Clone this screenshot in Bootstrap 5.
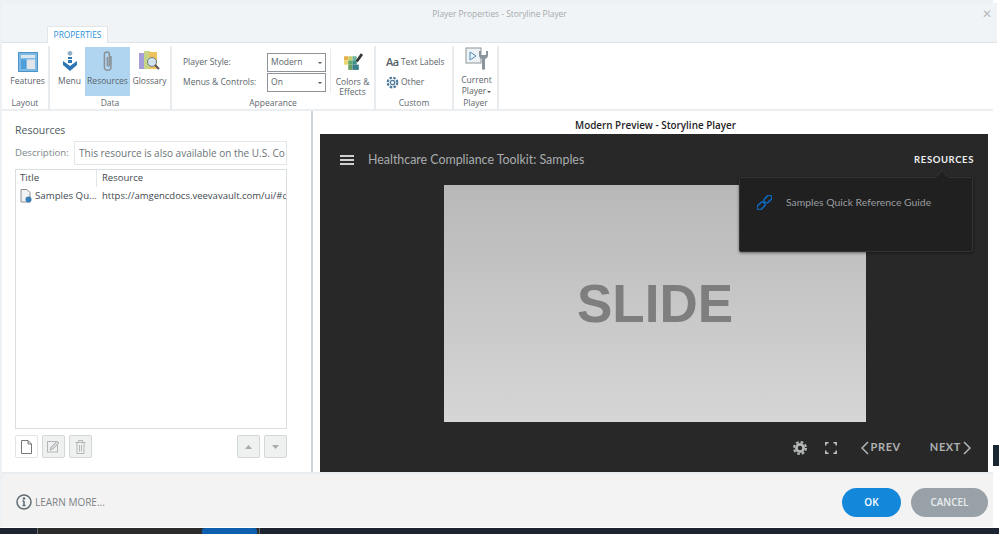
<!DOCTYPE html>
<html lang="en"><head><meta charset="utf-8">
<link href="https://cdn.jsdelivr.net/npm/bootstrap@5.3.0/dist/css/bootstrap.min.css" rel="stylesheet">
<style>
html,body{margin:0;height:534px;overflow:hidden;background:#fff;font-family:"Open Sans","Noto Sans",sans-serif}
.shell{width:999px;height:534px;position:relative;background:#fff}
.win{width:993px;height:527px;display:flex;flex-direction:column;background:#fff;border-top:3px solid #eef1f3;border-left:2px solid #eef1f3}
.titlebar{height:23px;width:995px;background:#f1f4f6;display:flex;justify-content:center;align-items:center;font-size:8.4px;color:#a4a9ad;position:relative;flex:none}
.closex{position:absolute;right:5px;top:3px;font-size:12px;color:#b6babd;line-height:16px}
.tabrow{height:17px;width:995px;background:#f1f4f6;flex:none;border-bottom:1px solid #dfe4e7;position:relative}
.ribtab{position:absolute;left:45px;top:0;height:17px;width:61px;background:#fff;color:#2b8fd8;font-size:8.4px;display:flex;align-items:center;justify-content:center;border:1px solid #e1e6e9;border-bottom:0}
.ribbon{height:68px;display:flex;flex:none;border-bottom:2px solid #eceff1;background:#fff;color:#5a6469;font-size:8.5px}
.rgroup{display:flex;flex-direction:column;border-right:2px solid #e8ecee;margin-top:3px;height:64px;flex:none}
.rbody{flex:1;display:flex;min-height:0}
.rlabel{height:14px;text-align:center;font-size:8.5px;line-height:14px;color:#5f696e}
.rbtn{display:flex;flex-direction:column;align-items:center;text-align:center;line-height:10px;flex:none;white-space:nowrap}
.rbtn svg{display:block;flex:none}
.rbtn.sel{background:#b0d5f0;width:45px;height:49px;margin-top:1px;padding-top:3px}
.rbtn.tall{line-height:11px}
.tricaret{display:inline-block;border-left:2.5px solid transparent;border-right:2.5px solid transparent;border-top:2.5px solid #555;vertical-align:middle;margin-left:1px}
.psel{width:59px;height:19px;border:1px solid #8e9497;background:#fff;font-size:8.5px;display:flex;align-items:center;justify-content:space-between;padding:0 3px;margin-bottom:1px;color:#5a6469}
.psel i{border-left:2px solid transparent;border-right:2px solid transparent;border-top:2px solid #555;display:block}
.main{flex:1;display:flex;min-height:0}
.leftp{width:311px;flex:none;padding:12px 0 0 13px;border-right:2px solid #cdd4d9;color:#5a6469;font-size:10px}
.leftp h6{font-size:10.5px;margin:0 0 4px;font-weight:400;color:#4f5a60;line-height:14px}
.descline{display:flex;align-items:center;height:24px;font-size:9.6px;color:#7d868b}
.desclab{width:59px;flex:none}
.descbox{width:213px;height:24px;border:1px solid #e2e7ea;font-size:10px;color:#6a7378;display:flex;align-items:center;padding-left:4px;white-space:nowrap;overflow:hidden}
.rlist{width:272px;height:260px;margin-top:4px;border:1px solid #d9dee1;font-size:9.7px;color:#3f4a50;overflow:hidden}
.rrow{display:flex;height:19px;align-items:center;white-space:nowrap}
.rrow.headr{height:17px}
.c1{width:81px;padding-left:4px;flex:none;display:flex;align-items:center;gap:3px}
.c2{padding-left:5px;overflow:hidden;font-size:9.5px}
.headr .c1{border-right:1px solid #e2e6e8;height:17px}
.toolrow{display:flex;margin-top:6px;width:272px;gap:4px}
.tbtn{width:23px;height:23px;border:1px solid #d2d7da;background:#eff0f0;display:flex;align-items:center;justify-content:center;border-radius:2px;flex:none}
.tbtn.on{background:#fff;border-color:#dfe5e8}
.tbtn.sp{margin-left:auto}
.rightp{flex:1;display:flex;flex-direction:column;min-width:0;padding-left:7px}
.prevtitle{height:23px;text-align:center;font-size:9.9px;font-weight:600;color:#1f2326;line-height:26px;padding:1px 2px 0 0;flex:none}
.stage{width:668px;height:338px;background:#282828;position:relative;flex:none;display:flex;flex-direction:column;font-family:Lato,sans-serif}
.stop{height:51px;display:flex;align-items:center;padding:1px 0 0 20px;flex:none}
.burger{width:14px;height:10px;border-top:2px solid #cfcfcf;border-bottom:2px solid #cfcfcf;position:relative;margin-right:14px;flex:none}
.burger::after{content:"";position:absolute;left:0;right:0;top:2px;height:2px;background:#cfcfcf}
.stitle{font-size:12.4px;color:#a9adaf;flex:1}
.sres{font-size:9.5px;font-weight:700;color:#eceeef;letter-spacing:.6px;margin-right:14px;padding-top:1px}
.slide{width:422px;height:237px;margin-left:124px;background:linear-gradient(#b8b8b8,#d6d6d6);display:flex;align-items:center;justify-content:center;font-family:"Liberation Sans",sans-serif;font-weight:700;font-size:53px;color:#7e7e7e;flex:none}
.snav{flex:1;display:flex;align-items:center;justify-content:flex-end;color:#aeb1b2;font-weight:700;font-size:11px;letter-spacing:.6px;padding-top:1px}
.pop{position:absolute;left:419px;top:43px;width:234px;height:75px;background:#202020;border:1px solid #333;border-radius:2px;box-shadow:0 1px 3px rgba(0,0,0,.5);display:flex;padding:17px 0 0 17px;font-size:10.4px;color:#9a9ea0;gap:14px}
.pop::before{content:"";position:absolute;right:25px;top:-6px;width:10px;height:10px;background:#202020;border-left:1px solid #333;border-top:1px solid #333;transform:rotate(45deg)}
.foot{height:55px;flex:none;background:#f3f3f3;border-top:2px solid #e9edef;display:flex;align-items:center;padding:3px 0 0 14px;color:#7b8287;font-size:10px;gap:3px}
.pillb{height:29px;border-radius:15px;color:#fff;font-size:10px;font-weight:600;display:flex;align-items:center;justify-content:center;border:0;padding:0}
.okb{width:59px;background:#1388da;margin-left:auto;margin-right:7px}
.cancelb{width:77px;background:#98a1a7;margin-right:5px;color:#e8ecee}
.rightedge{position:absolute;right:0;top:445px;width:6px;height:21px;background:#1b2730}
.taskbar{position:absolute;left:0;right:0;bottom:0;height:6px;background:#1b2430;display:flex}
.tb1{margin-left:37px;width:223px;background:#2c2c2c;border-left:1px solid #666;border-right:1px solid #666;position:relative}
.tb2{position:absolute;left:164px;top:0;width:55px;height:6px;background:#0e5fae;border-radius:3px 3px 0 0}
</style></head><body>
<div class="shell">
<div class="win">
 <div class="titlebar">Player Properties - Storyline Player<span class="closex">✕</span></div>
 <div class="tabrow"><div class="ribtab">PROPERTIES</div></div>
 <div class="ribbon">
  <div class="rgroup" style="width:48px"><div class="rbody"><div class="rbtn" style="width:51px;padding-top:6px;margin-right:-5px"><svg width="20" height="20" viewBox="0 0 20 20"><rect x=".5" y=".5" width="19" height="19" fill="#7cb9e4" stroke="#4b93c6"/><rect x="3" y="3" width="14" height="3" fill="#dbe6ee"/><rect x="3" y="7.500" width="5" height="9.500" fill="#4e9fd8"/><rect x="9" y="7.500" width="8" height="9.500" fill="#e3e6e8"/></svg><span style="margin-top:4px">Features</span></div></div><div class="rlabel">Layout</div></div>
  <div class="rgroup" style="width:122px"><div class="rbody">
   <div class="rbtn" style="width:35px;padding:4px 0 0 4px"><svg width="20" height="22" viewBox="0 0 20 22"><path d="M10 1a2.400 2.400 0 0 1 2 3.600L10 6 8 4.600A2.400 2.400 0 0 1 10 1z" fill="#8daec8"/><rect x="8" y="7" width="4" height="2" fill="#2d76b5"/><rect x="8" y="10" width="4" height="3" fill="#2d76b5"/><path d="M3 11l7 5 7-5v4l-7 6-7-6z" fill="#2d76b5"/></svg><span style="margin-top:4px">Menu</span></div>
   <div class="rbtn sel"><svg width="14" height="23" viewBox="0 0 14 23" fill="none" stroke="#8a9297" stroke-width="1.500"><path d="M10 6v11a3.300 3.300 0 0 1-6.600 0V4.500a2.500 2.500 0 0 1 5 0V15a1 1 0 0 1-2 0V7"/></svg><span style="margin-top:3px">Resources</span></div>
   <div class="rbtn" style="width:39px;padding-top:4px"><svg width="23" height="22" viewBox="0 0 23 22"><rect x="1" y="3" width="6" height="16" fill="#a49fd8"/><rect x="6" y="1" width="6" height="18" fill="#c5d486"/><rect x="11" y="2" width="8" height="17" fill="#eec35e"/><circle cx="14" cy="12" r="4.500" fill="#cfe2ee" stroke="#6b7b85"/><path d="M17 15l4 4" stroke="#555" stroke-width="2"/></svg><span style="margin-top:4px">Glossary</span></div>
  </div><div class="rlabel">Data</div></div>
  <div class="rgroup" style="width:204px"><div class="rbody">
   <div style="width:96px;padding:6px 0 0 11px;line-height:20px;white-space:nowrap"><div>Player Style:</div><div>Menus &amp; Controls:</div></div>
   <div style="padding-top:7px"><div class="psel">Modern<i></i></div><div class="psel">On<i></i></div></div>
   <div style="width:1px;height:44px;background:#e8ecee;margin:3px 0 0 4px"></div>
   <div class="rbtn" style="width:43px;padding-top:6px"><svg width="20" height="19" viewBox="1 0 19 18"><path d="M2 4h4v4H2z" fill="#e8b04c"/><path d="M6 4h4v4H6z" fill="#c8cf6a"/><path d="M10 4h4v4h-4z" fill="#6fb4a0"/><path d="M2 8h4v4H2z" fill="#ecd76a"/><path d="M6 8h4v4H6z" fill="#5fa86e"/><path d="M10 8h4v4h-4z" fill="#3d8f86"/><path d="M6 12h4v5H6z" fill="#6d9f5e"/><path d="M10 12h6v5h-6z" fill="#3b7f8c"/><path d="M14 9l5-7" stroke="#333" stroke-width="2.500"/></svg><span style="margin-top:6px">Colors &amp;<br>Effects</span></div>
  </div><div class="rlabel">Appearance</div></div>
  <div class="rgroup" style="width:78px"><div class="rbody"><div style="padding:6px 0 0 10px;line-height:20px;white-space:nowrap">
    <div class="d-flex align-items-center" style="gap:2px"><span style="font-size:11px;font-weight:600;color:#596268;width:13px;letter-spacing:-.5px">Aa</span><span style="font-size:8.3px">Text Labels</span></div>
    <div class="d-flex align-items-center" style="gap:2px"><svg width="13" height="13" viewBox="0 0 13 13" fill="none" stroke="#4d7a9c" stroke-width="1.300"><circle cx="6.500" cy="6.500" r="2.200"/><circle cx="6.500" cy="6.500" r="4.800" stroke-dasharray="2.500 1.300" stroke-width="2.200"/></svg>Other</div>
  </div></div><div class="rlabel">Custom</div></div>
  <div class="rgroup" style="width:45px"><div class="rbody"><div class="rbtn tall" style="width:43px;padding:1px 0 0 2px"><svg width="24" height="25" viewBox="0 0 24 25"><rect x="1" y="1" width="15" height="15" fill="#eef2f5" stroke="#8b969c"/><path d="M5 5l6 4-6 4z" fill="none" stroke="#4d8bbd"/><path d="M14 4v5a4 4 0 0 0 3 3v10a2 2 0 0 0 3 0V12a4 4 0 0 0 3-3V4l-2 0v4h-5V4z" fill="#8b969c"/></svg><span style="margin-top:2px">Current<br>Player<i class="tricaret"></i></span></div></div><div class="rlabel">Player</div></div>
 </div>
 <div class="main">
  <div class="leftp">
   <h6>Resources</h6>
   <div class="descline"><span class="desclab">Description:</span><div class="descbox">This resource is also available on the U.S. Co</div></div>
   <div class="rlist">
    <div class="rrow headr"><div class="c1">Title</div><div class="c2">Resource</div></div>
    <div class="rrow"><div class="c1"><svg width="12" height="14" viewBox="0 0 12 14"><path d="M1 .5h6l3 3v9.500H1z" fill="#f1f2f3" stroke="#8b9297"/><circle cx="8.500" cy="10.500" r="3" fill="#3b7fb9"/></svg>Samples Qu...</div><div class="c2">https://amgencdocs.veevavault.com/ui/#d</div></div>
   </div>
   <div class="toolrow">
    <div class="tbtn on"><svg width="11" height="14" viewBox="0 0 11 14" fill="none" stroke="#777"><path d="M.5.500h6.500l3.500 3.500v9.500H.5zM7 .5v3.500h3.500"/></svg></div>
    <div class="tbtn"><svg width="13" height="13" viewBox="0 0 13 13" fill="none" stroke="#b3b6b8"><rect x=".5" y="1.500" width="10" height="10.500"/><path d="M3 10l1-3 6-6 2 2-6 6z" fill="#d3d5d6"/></svg></div>
    <div class="tbtn"><svg width="11" height="14" viewBox="0 0 11 14" fill="none" stroke="#b3b6b8"><path d="M.5 2.500h10M3.500 2.500V.5h4v2M2 2.500v11h7v-11M4.500 5v6.500M6.500 5v6.500"/></svg></div>
    <div class="tbtn sp"><svg width="7" height="4" viewBox="0 0 7 4"><path d="M3.500 0L7 4H0z" fill="#a8abad"/></svg></div>
    <div class="tbtn"><svg width="7" height="4" viewBox="0 0 7 4"><path d="M3.500 4L7 0H0z" fill="#a8abad"/></svg></div>
   </div>
  </div>
  <div class="rightp">
   <div class="prevtitle">Modern Preview - Storyline Player</div>
   <div class="stage">
    <div class="stop"><div class="burger"></div><div class="stitle">Healthcare Compliance Toolkit: Samples</div><div class="sres">RESOURCES</div></div>
    <div class="slide">SLIDE</div>
    <div class="snav">
     <svg width="14" height="14" viewBox="0 0 14 14" fill="none" style="margin-right:18px"><circle cx="7" cy="7" r="5" fill="#b4b7b8"/><circle cx="7" cy="7" r="6" stroke="#b4b7b8" stroke-width="2" stroke-dasharray="2.700 2"/><circle cx="7" cy="7" r="2.200" fill="#282828"/></svg>
     <svg width="12" height="12" viewBox="0 0 12 12" fill="none" stroke="#c4c6c7" stroke-width="1.500" style="margin-right:24px"><path d="M.8 3.500V.8h2.700M8.500.8h2.700v2.700M11.200 8.500v2.700H8.500M3.500 11.200H.8V8.500"/></svg>
     <svg width="8" height="14" viewBox="0 0 8 14" fill="none" stroke="#b4b7b8" stroke-width="1.500" style="margin-right:2px"><path d="M7 1L1 7l6 6"/></svg><span style="margin-right:29px">PREV</span>
     <span style="margin-right:2px">NEXT</span><svg width="8" height="14" viewBox="0 0 8 14" fill="none" stroke="#b4b7b8" stroke-width="1.500" style="margin-right:17px"><path d="M1 1l6 6-6 6"/></svg>
    </div>
    <div class="pop"><svg width="15" height="15" viewBox="0 0 15 15" fill="none" stroke="#0f64b4" stroke-width="1.700"><rect x="6.500" y="1.500" width="9" height="5" rx="2.500" transform="rotate(-45 11 4)"/><rect x="-.5" y="8.500" width="9" height="5" rx="2.500" transform="rotate(-45 4 11)"/></svg><span>Samples Quick Reference Guide</span></div>
   </div>
  </div>
 </div>
 <div class="foot">
  <svg width="16" height="16" viewBox="0 0 16 16" fill="none" stroke="#5f6b72" stroke-width="1.500"><circle cx="8" cy="8" r="7"/><path d="M8 7v4.500M6.500 11.500h3M6.500 7H8"/><circle cx="8" cy="4.500" r=".6"/></svg>
  <span>LEARN MORE...</span>
  <button class="btn pillb okb">OK</button><button class="btn pillb cancelb">CANCEL</button>
 </div>
</div>
<div class="rightedge"></div>
<div class="taskbar"><div class="tb1"><div class="tb2"></div></div></div>
</div>
</body></html>
